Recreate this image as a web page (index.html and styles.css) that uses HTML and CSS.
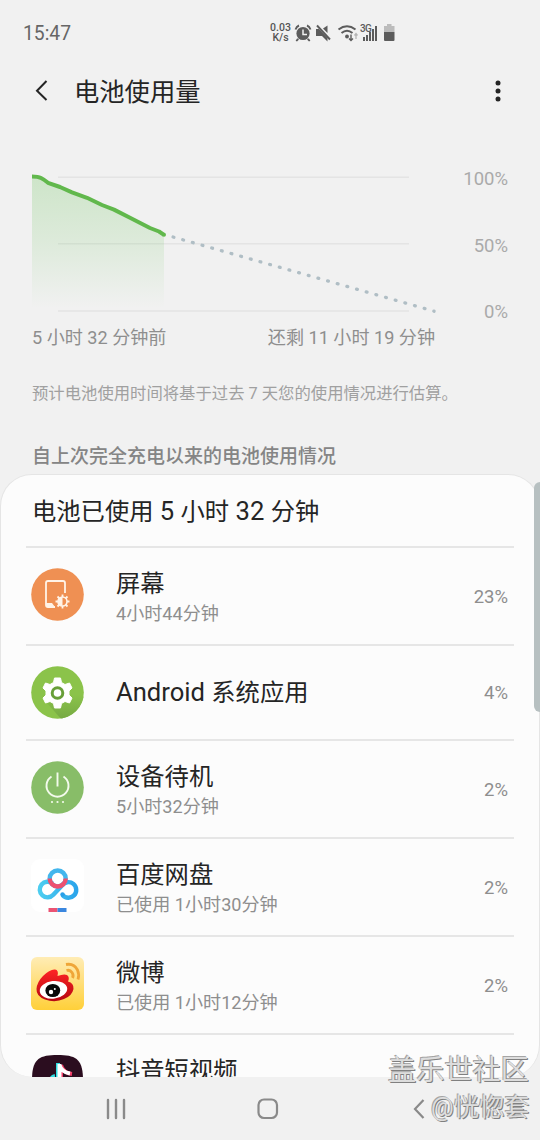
FILE: index.html
```html
<!DOCTYPE html>
<html lang="zh-CN">
<head>
<meta charset="utf-8">
<title>电池使用量</title>
<link rel="stylesheet" href="styles.css">
</head>
<body>
<div class="screen">
  <div class="statusbar">
    <span class="clock">15:47</span>
    <span class="speed"><span>0.03</span><span>K/s</span></span>
    <svg class="status-icons" width="104" height="24" viewBox="0 0 104 24">
      <g fill="#5c5c5c">
        <path d="M4.200 17.200l-1.600 2.600 1.400.6 2-2zM15.800 17.200l1.600 2.600-1.400.6-2-2z"/>
        <circle cx="10" cy="12.500" r="6.600"/>
        <path d="M23 8h3l8.500 9v3.500l-5.500-5.500h-6z"/>
        <path d="M34.500 4.500v7.500l-4.500-4.500z"/>
        <rect x="70" y="16" width="2" height="4"/><rect x="73" y="14" width="2" height="6"/><rect x="76" y="11" width="2" height="9"/><rect x="79" y="8" width="2" height="12"/><rect x="82" y="5" width="2" height="15"/>
        <circle cx="54" cy="15.500" r="1.900"/>
      </g>
      <path d="M10 8.500v5h4" fill="none" stroke="#f1f1f1" stroke-width="1.500"/>
      <path d="M2.500 8.500Q3.500 5.500 6 4.500M14 4.500Q16.500 5.500 17.500 8.500" fill="none" stroke="#5c5c5c" stroke-width="1.900"/>
      <path d="M24 4.500l13 14" stroke="#5c5c5c" stroke-width="1.900"/>
      <path d="M45.500 8.500q8.500-6.500 17 0M48.500 12q5.500-4.500 11 0" fill="none" stroke="#5c5c5c" stroke-width="2"/>
      <path d="M58 13.500v6M56 17.500l2 2 2-2" fill="none" stroke="#5c5c5c" stroke-width="1.400"/>
      <path d="M63 18v-5M61.500 14.500l1.500-2 1.500 2" fill="none" stroke="#b5b5b5" stroke-width="1.300"/>
      <text class="net" x="67" y="10.500">3G</text>
      <path d="M94 3h4.500v2h3v6h-10.500v-6h3z" fill="#bcbcbc"/>
      <path d="M91 11h10.500v8q0 1-1 1h-8.500q-1 0-1-1z" fill="#5c5c5c"/>
    </svg>
  </div>
  <header class="header">
    <svg width="16" height="24" viewBox="0 0 16 24"><path d="M13.500 2L4 11.800l9.500 9.200" fill="none" stroke="#252525" stroke-width="2"/></svg>
    <h1 class="title">电池使用量</h1>
    <svg class="more" width="8" height="24" viewBox="0 0 8 24" fill="#252525"><circle cx="4" cy="4" r="2.500"/><circle cx="4" cy="12" r="2.500"/><circle cx="4" cy="20" r="2.500"/></svg>
  </header>
  <section class="chart">
    <svg class="plot" width="410" height="150" viewBox="30 168 410 150">
      <defs><linearGradient id="fade" x1="0" y1="176" x2="0" y2="308" gradientUnits="userSpaceOnUse"><stop offset="0" stop-color="#62c050" stop-opacity=".25"/><stop offset=".5" stop-color="#62c050" stop-opacity=".14"/><stop offset="1" stop-color="#62c050" stop-opacity="0"/></linearGradient></defs>
      <path d="M58 177.300H409M58 243.800H409M58 311H409" stroke="#e4e4e4" stroke-width="1.400"/>
      <path d="M32 177L39 178 48 183 60 187 72 192.500 87 198 102 205 114 209.500 130 218 150 228 159 231.500 164 235V308H32z" fill="url(#fade)"/>
      <path d="M32 176.500Q38 176.500 41 178T48 182.800L60 187 72 192.300 87 197.800 102 205 114 209.600 130 217.800 150 228 159 231.500 164 234.800" fill="none" stroke="#61b84c" stroke-width="4" stroke-linejoin="round"/>
      <circle cx="164" cy="234.800" r="2" fill="#61b84c"/>
      <path d="M173.100 237L434 311.200" stroke="#b0bec5" stroke-width="3.300" stroke-linecap="round" stroke-dasharray=".8 9.240"/>
    </svg>
    <div class="scale"><span>100%</span><span>50%</span><span>0%</span></div>
  </section>
  <div class="range"><span>5 小时 32 分钟前</span><span>还剩 11 小时 19 分钟</span></div>
  <p class="note">预计电池使用时间将基于过去 7 天您的使用情况进行估算。</p>
  <h2 class="subhead">自上次完全充电以来的电池使用情况</h2>
  <main class="card">
    <div class="summary">电池已使用<span class="latin"> 5 </span>小时<span class="latin"> 32 </span>分钟</div>
    <div class="row">
      <svg class="icon" viewBox="0 0 53 53"><circle cx="26.500" cy="26.500" r="26.300" fill="#ef9053"/><path d="M34 25V15q0-2-2-2H17q-2 0-2 2v22q0 2 2 2h7" fill="none" stroke="#fff3e7" stroke-width="1.800"/><path d="M15 35h6l3 4h-7q-2 0-2-2z" fill="#fff3e7"/><circle cx="31.500" cy="33.500" r="4.500" fill="none" stroke="#fff3e7" stroke-width="1.600"/><path d="M31.500 29a4.500 4.500 0 0 0 0 9z" fill="#fff3e7"/><path d="M31.500 26.500v2.500M31.500 38v2.500M24.500 33.500h2.500M36 33.500h2.500M26.500 28.500l2 2M34.500 36.500l2 2M36.500 28.500l-2 2M28.500 36.500l-2 2" stroke="#fff3e7" stroke-width="1.800"/></svg>
      <div class="label"><b>屏幕</b><small>4小时44分钟</small></div><span class="pct">23%</span>
    </div>
    <div class="row short">
      <svg class="icon" viewBox="0 0 53 53"><defs><clipPath id="disc"><circle cx="26.500" cy="26.500" r="26.300"/></clipPath><linearGradient id="shade" x2="0" y2="1"><stop offset=".3" stop-color="#8bc34a"/><stop offset="1" stop-color="#75a843"/></linearGradient></defs><circle cx="26.500" cy="26.500" r="26.300" fill="#8bc34a"/><path clip-path="url(#disc)" d="M16 37l15 17 23-5V32L39 18z" fill="url(#shade)"/><path fill="#fff" stroke="#fff" stroke-width="1" stroke-linejoin="round" d="M23.500 12h6l1 4.500 3.500 2 4.500-1.500 2.500 5-3 3v4l3 3-2.500 5-4.500-1.500-3.500 2-1 4.500h-6l-1-4.500-3.500-2-4.500 1.500-2.500-5 3-3v-4l-3-3 2.500-5 4.500 1.500 3.500-2z"/><circle cx="26.500" cy="27" r="5.300" fill="#fff" stroke="#689f38" stroke-width="3"/></svg>
      <div class="label"><b><span class="latin">Android </span>系统应用</b></div><span class="pct">4%</span>
    </div>
    <div class="row">
      <svg class="icon" viewBox="0 0 53 53"><circle cx="26.500" cy="26.500" r="26.300" fill="#88bd68"/><path d="M20.500 15.500a11 11 0 1 0 12 0M26.500 11.500v14" fill="none" stroke="#f3faec" stroke-width="1.900"/><g fill="#f3faec"><circle cx="21" cy="41" r="1.100"/><circle cx="26.500" cy="41" r="1.100"/><circle cx="32" cy="41" r="1.100"/></g></svg>
      <div class="label"><b>设备待机</b><small>5小时32分钟</small></div><span class="pct">2%</span>
    </div>
    <div class="row">
      <svg class="icon" viewBox="0 0 53 53"><defs><linearGradient id="cloud"><stop stop-color="#4dcdf0"/><stop offset="1" stop-color="#2ba5eb"/></linearGradient></defs><rect width="53" height="53" rx="9" fill="#fff"/><g fill="none" stroke-width="4.400"><path d="M21.500 24.500A7.800 7.800 0 1 0 22.300 35.800L31 26.500A7.800 7.800 0 1 1 31.500 36" stroke="url(#cloud)" stroke-linejoin="round"/><circle cx="31.500" cy="35.500" r="2.200" fill="#299fe8" stroke="none"/><circle cx="26.700" cy="19.500" r="8" stroke="#43b6ed"/><path d="M18.700 19.500a8 8 0 0 0 16 0" stroke="#ed506f"/></g><path d="M17.500 49h9v4h-9z" fill="#eb5373"/><path d="M26.500 49h9v4h-9z" fill="#3b87df"/></svg>
      <div class="label"><b>百度网盘</b><small>已使用 1小时30分钟</small></div><span class="pct">2%</span>
    </div>
    <div class="row">
      <svg class="icon" viewBox="0 0 53 53"><defs><linearGradient id="gold" x2="0" y2="1"><stop stop-color="#ffecb5"/><stop offset="1" stop-color="#ffd039"/></linearGradient><linearGradient id="red" x2="0" y2="1"><stop stop-color="#ff2424"/><stop offset="1" stop-color="#b60712"/></linearGradient></defs><rect width="53" height="53" rx="6" fill="url(#gold)"/><path d="M5.500 32Q6 25 12 19Q19 12 24 12.500Q28 13 26.500 19Q33 16.500 36 18Q39 20 37 24.500Q43 26 42.500 32Q41 39 33 42Q24 46 14 42.500Q5 39 5.500 32z" fill="url(#red)"/><ellipse cx="22.500" cy="32.800" rx="13.800" ry="8.800" transform="rotate(-7 22.500 32.800)" fill="#fff"/><ellipse cx="21.800" cy="33.500" rx="7.400" ry="6.600" fill="#090909"/><circle cx="20" cy="35" r="2.200" fill="#fff"/><circle cx="23.800" cy="32" r="1" fill="#fff"/><path d="M35 7.500Q43 6 46.500 13Q48.500 17.500 47 22.500M35.500 13.500Q39 12.500 41 15.500Q43 18.500 41.500 21" fill="none" stroke="#efa638" stroke-width="2.800"/></svg>
      <div class="label"><b>微博</b><small>已使用 1小时12分钟</small></div><span class="pct">2%</span>
    </div>
    <div class="row">
      <svg class="icon" viewBox="0 0 53 53"><path d="M26.500 0C45 0 52 4 52 25S45 53 26.500 53 1 46 1 25 8 0 26.500 0z" fill="#2b0d1f"/><path d="M27 8v29q-7 6-9-2 0-13 6-14" fill="none" stroke="#30dce0" stroke-width="4"/><path d="M30 10v28M30 10q2 8 11 9" fill="none" stroke="#f23d68" stroke-width="4"/><path d="M28.500 9v30M28.500 10q2 7 10.500 8.500" fill="none" stroke="#fff" stroke-width="4"/></svg>
      <div class="label"><b>抖音短视频</b></div>
    </div>
  </main>
  <nav class="navbar">
    <svg width="20" height="22" viewBox="0 0 20 22"><path d="M2 2v18M10 2v18M18 2v18" stroke="#8a8a8a" stroke-width="2.400" stroke-linecap="round"/></svg>
    <svg width="22" height="22" viewBox="0 0 22 22"><rect x="1.500" y="1.500" width="18.500" height="18.500" rx="5.500" fill="none" stroke="#8a8a8a" stroke-width="2.200"/></svg>
    <svg width="14" height="22" viewBox="0 0 14 22"><path d="M11.500 2L3 11l8.500 9" fill="none" stroke="#8a8a8a" stroke-width="2.200"/></svg>
  </nav>
  <div class="scrollbar"></div>
  <div class="watermark"><span class="community">盖乐世社区</span><span class="author">@恍惚套</span></div>
</div>
</body>
</html>
```
FILE: styles.css
```css
* { box-sizing: border-box; }
body { margin: 0; background: #f1f1f1; }
.screen { position: relative; width: 540px; height: 1140px; overflow: hidden; background: #f1f1f1; color: #252525; font-family: Roboto, "Noto Sans CJK SC", sans-serif; display: flex; flex-direction: column; }
.screen svg { display: block; flex: none; }
.statusbar { height: 66px; padding-left: 23px; display: flex; align-items: center; flex: none; }
.clock { width: 245px; font-size: 19.300px; color: #666; }
.speed { width: 25px; display: flex; flex-direction: column; text-align: center; font-size: 10.500px; line-height: 10px; font-weight: 500; color: #555; }
.net { font: 500 10px Roboto, sans-serif; fill: #5c5c5c; letter-spacing: -.6px; }
.header { height: 50px; padding: 0 38px 0 33px; display: flex; align-items: center; flex: none; }
.title { margin: 3px 0 0 25px; font-size: 25.300px; line-height: 36px; font-weight: 400; }
.more { margin-left: auto; }
.chart { height: 150px; margin: 52px 32px 0 30px; display: flex; justify-content: space-between; flex: none; }
.scale { display: flex; flex-direction: column; justify-content: space-between; height: 153px; margin-top: 1px; text-align: right; font-size: 18.500px; line-height: 20px; color: #aaa; }
.range { height: 30px; margin: 5px 105px 0 32px; display: flex; justify-content: space-between; font-size: 18.100px; line-height: 30px; color: #8e8e8e; white-space: nowrap; flex: none; }
.note { margin: 28px 0 0 32px; font-size: 16.350px; line-height: 26px; color: #a0a0a0; white-space: nowrap; flex: none; }
.subhead { margin: 35px 0 0 32px; height: 32px; font-size: 19px; line-height: 30px; font-weight: 500; color: #858585; white-space: nowrap; flex: none; }
.card { height: 603px; flex: none; background: #fcfcfc; border: 1px solid #e5e5e5; border-bottom: 0; border-radius: 32px; padding: 0 25px; overflow: hidden; }
.summary { height: 71px; padding-left: 6px; font-size: 24.300px; line-height: 73px; white-space: pre; }
.latin { font-size: 25.600px; line-height: 1; white-space: pre; }
.row { height: 98px; border-top: 2px solid #e6e6e6; padding: 0 6px 0 5px; display: flex; align-items: center; }
.icon { width: 53px; height: 53px; margin-bottom: 3px; }
.label { margin: 4px 0 0 32px; display: flex; flex-direction: column; }
.label b { font-size: 24.300px; line-height: 32px; font-weight: 400; }
.label small { font-size: 18.100px; line-height: 28px; color: #8e8e8e; }
.pct { margin: 1px 0 0 auto; font-size: 18.500px; color: #8e8e8e; }
.short { height: 95px; }
.short .icon { margin-bottom: 1px; }
.short .label { margin-top: 0; }
.row:last-child .label { align-self: flex-start; margin-top: 20px; }
.navbar { height: 63px; padding: 0 114px 0 106px; display: flex; align-items: center; justify-content: space-between; flex: none; }
.navbar svg:nth-child(2) { margin-right: 3px; }
.scrollbar { position: absolute; left: 534px; top: 482px; width: 12px; height: 230px; border-radius: 6px; background: #b7c0c1; }
.watermark { position: absolute; left: 388px; top: 1052px; width: 148px; color: #ddd; font-family: Roboto, "Noto Sans CJK SC", sans-serif; white-space: nowrap; text-shadow: 1px 1px 0 #808080, -1px -1px 0 #a5a5a5; display: flex; flex-direction: column; }
.community { font-size: 28.200px; line-height: 38px; }
.author { padding-left: 43px; font-size: 25.300px; line-height: 35px; }
```
